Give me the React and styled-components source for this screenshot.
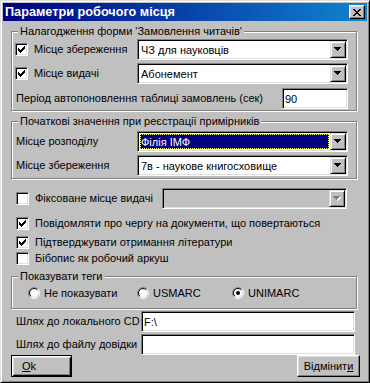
import React from 'react';
import styled, { createGlobalStyle, css } from 'styled-components';

const Global = createGlobalStyle`
  html, body { margin: 0; padding: 0; background: #c0c0c0; }
  body {
    font-family: "Liberation Sans", Arial, sans-serif;
    font-size: 11px;
    color: #000;
  }
  #root { width: 370px; height: 383px; }
`;

const raised = css`
  box-sizing: border-box;
  background: #c0c0c0;
  border: 1px solid;
  border-color: #fff #000 #000 #fff;
  box-shadow: inset -1px -1px 0 #808080, inset 1px 1px 0 #dfdfdf;
`;

const sunken = css`
  box-sizing: border-box;
  border: 1px solid;
  border-color: #808080 #fff #fff #808080;
  box-shadow: inset 1px 1px 0 #000, inset -1px -1px 0 #dfdfdf;
`;

const Window = styled.div`
  box-sizing: border-box;
  width: 370px;
  height: 383px;
  background: #c0c0c0;
  border: 1px solid;
  border-color: #dfdfdf #000 #000 #dfdfdf;
  box-shadow: inset 1px 1px 0 #fff, inset -1px -1px 0 #808080;
  padding: 2px;
  display: flex;
  flex-direction: column;
`;

const TitleBar = styled.div`
  height: 18px;
  flex: none;
  background: linear-gradient(to right, #000080, #1084d0);
  display: flex;
  align-items: center;
  justify-content: space-between;
  padding: 0 2px;
`;

const Title = styled.span`
  color: #fff;
  font-weight: bold;
  font-size: 12.7px;
  line-height: 14px;
  white-space: nowrap;
`;

const CloseBtn = styled.span`
  ${raised};
  width: 16px;
  height: 14px;
  display: flex;
  align-items: center;
  justify-content: center;
`;

const Content = styled.div`
  display: flex;
  flex-direction: column;
  padding: 0 10px 0 8px;
`;

const Group = styled.div`
  position: relative;
  box-sizing: border-box;
  margin-top: ${p => p.$mt}px;
  padding: ${p => p.$pt}px 8px ${p => p.$pb}px 3px;
  border: 1px solid #808080;
  box-shadow: inset 1px 1px 0 #fff, 1px 1px 0 #fff;
  display: flex;
  flex-direction: column;
`;

const Legend = styled.span`
  position: absolute;
  top: -7px;
  left: 6px;
  padding: 0 2px;
  background: #c0c0c0;
  line-height: 13px;
  white-space: nowrap;
`;

const Row = styled.div`
  display: flex;
  align-items: center;
  justify-content: space-between;
  height: ${p => p.$h ?? 21}px;
  margin-top: ${p => p.$mt ?? 0}px;
`;

const LeftGroup = styled.div`
  display: flex;
  align-items: center;
  gap: ${p => p.$gap ?? 6}px;
  margin-left: ${p => p.$ml ?? 0}px;
`;

const Label = styled.span`
  margin-left: ${p => p.$ml ?? 0}px;
  white-space: nowrap;
  line-height: 13px;
`;

const CheckBox = styled.span`
  ${sunken};
  width: 13px;
  height: 13px;
  flex: none;
  background: #fff;
  display: flex;
  align-items: center;
  justify-content: center;
`;

const Field = styled.div`
  ${sunken};
  width: ${p => p.$w}px;
  height: 21px;
  flex: none;
  margin-right: ${p => p.$mr ?? 0}px;
  background: ${p => (p.$disabled ? '#c0c0c0' : '#fff')};
  padding: 1px;
  display: flex;
  align-items: stretch;
`;

const FieldText = styled.span`
  flex: 1;
  display: flex;
  align-items: center;
  white-space: nowrap;
  overflow: hidden;
  padding-left: ${p => p.$pl ?? 2}px;
  ${p =>
    p.$selected &&
    css`
      margin: 1px;
      padding-left: 1px;
      background: #000080;
      color: #fff;
      outline: 1px dotted #ffff80;
      outline-offset: -1px;
    `}
`;

const DropBtn = styled.span`
  box-sizing: border-box;
  width: 16px;
  height: 17px;
  flex: none;
  background: #c0c0c0;
  border: 1px solid;
  border-color: #dfdfdf #000 #000 #dfdfdf;
  box-shadow: inset 1px 1px 0 #fff, inset -1px -1px 0 #808080;
  display: flex;
  align-items: center;
  justify-content: center;
`;

const RadioItem = styled.div`
  display: flex;
  align-items: center;
  gap: 4px;
  width: ${p => p.$w}px;
  flex: none;
  margin-left: ${p => p.$ml ?? 0}px;
`;

const RadioRow = styled.div`
  display: flex;
  align-items: center;
  height: 12px;
`;

const ButtonRow = styled.div`
  display: flex;
  justify-content: space-between;
  align-items: center;
  margin-right: -3px;
`;

const Button = styled.button`
  ${raised};
  width: ${p => p.$w}px;
  height: 22px;
  padding: 0 0 0 ${p => p.$pl ?? 0}px;
  font: inherit;
  font-size: 11px;
  color: #000;
  display: flex;
  align-items: center;
  justify-content: ${p => (p.$left ? 'flex-start' : 'center')};
  ${p =>
    p.$default &&
    css`
      border-color: #000;
      box-shadow: inset 1px 1px 0 #fff, inset -1px -1px 0 #000,
        inset 2px 2px 0 #dfdfdf, inset -2px -2px 0 #808080;
    `}
`;

const Mn = styled.u`
  text-decoration: underline;
  text-underline-offset: 1px;
`;

function Check() {
  return (
    <svg width="7" height="7" viewBox="0 0 7 7" shapeRendering="crispEdges">
      <path
        fill="#000"
        d="M0 2h1v3H0zM1 3h1v3H1zM2 4h1v3H2zM3 3h1v3H3zM4 2h1v3H4zM5 1h1v3H5zM6 0h1v3H6z"
      />
    </svg>
  );
}

function CheckItem({ checked, children, ml, gap }) {
  return (
    <LeftGroup $ml={ml} $gap={gap}>
      <CheckBox>{checked && <Check />}</CheckBox>
      <Label>{children}</Label>
    </LeftGroup>
  );
}

function Arrow({ disabled }) {
  const d = 'M0 0h7v1H0zM1 1h5v1H1zM2 2h3v1H2zM3 3h1v1H3z';
  return (
    <svg width="8" height="5" viewBox="0 0 8 5" shapeRendering="crispEdges">
      {disabled && <path fill="#fff" transform="translate(1 1)" d={d} />}
      <path fill={disabled ? '#808080' : '#000'} d={d} />
    </svg>
  );
}

function Combo({ w, value, selected, disabled, mr }) {
  return (
    <Field $w={w} $disabled={disabled} $mr={mr}>
      <FieldText $selected={selected}>{value}</FieldText>
      <DropBtn>
        <Arrow disabled={disabled} />
      </DropBtn>
    </Field>
  );
}

function Radio({ checked }) {
  const half = (r, c1, c2) => {
    const k = r * 0.7071;
    const a = `M${6 - k} ${6 + k}A${r} ${r} 0 0 1 ${6 + k} ${6 - k}`;
    const b = `M${6 + k} ${6 - k}A${r} ${r} 0 0 1 ${6 - k} ${6 + k}`;
    return (
      <>
        <path d={a} stroke={c1} fill="none" strokeWidth="1" />
        <path d={b} stroke={c2} fill="none" strokeWidth="1" />
      </>
    );
  };
  return (
    <svg width="12" height="12" viewBox="0 0 12 12" style={{ flex: 'none' }}>
      <circle cx="6" cy="6" r="4.5" fill="#fff" />
      {half(5.5, '#808080', '#fff')}
      {half(4.5, '#000', '#dfdfdf')}
      {checked && <circle cx="6" cy="6" r="2" fill="#000" />}
    </svg>
  );
}

export default function App() {
  return (
    <>
      <Global />
      <Window>
        <TitleBar>
          <Title>Параметри робочого місця</Title>
          <CloseBtn>
            <svg width="8" height="7" viewBox="0 0 8 7" shapeRendering="crispEdges">
              <path
                fill="#000"
                d="M0 0h2v1H0zM6 0h2v1H6zM1 1h2v1H1zM5 1h2v1H5zM2 2h4v1H2zM3 3h2v1H3zM2 4h4v1H2zM1 5h2v1H1zM5 5h2v1H5zM0 6h2v1H0zM6 6h2v1H6z"
              />
            </svg>
          </CloseBtn>
        </TitleBar>
        <Content>
          <Group $mt={10} $pt={7} $pb={1}>
            <Legend>Налагодження форми 'Замовлення читачів'</Legend>
            <Row>
              <CheckItem checked>Місце збереження</CheckItem>
              <Combo w={211} value="ЧЗ для науковців" />
            </Row>
            <Row $mt={3}>
              <CheckItem checked>Місце видачі</CheckItem>
              <Combo w={211} value="Абонемент" />
            </Row>
            <Row $mt={4}>
              <Label $ml={1}>Період автопоновлення таблиці замовлень (сек)</Label>
              <Field $w={66}>
                <FieldText $pl={1}>90</FieldText>
              </Field>
            </Row>
          </Group>

          <Group $mt={10} $pt={9} $pb={2}>
            <Legend>Початкові значення при реєстрації примірників</Legend>
            <Row>
              <Label $ml={1}>Місце розподілу</Label>
              <Combo w={211} value="Філія ІМФ" selected />
            </Row>
            <Row $mt={3}>
              <Label $ml={1}>Місце збереження</Label>
              <Combo w={211} value="7в - наукове книгосховище" />
            </Row>
          </Group>

          <Row $mt={9}>
            <CheckItem ml={5}>Фіксоване місце видачі</CheckItem>
            <Combo w={185} value="" disabled mr={10} />
          </Row>
          <Row $h={13} $mt={8}>
            <CheckItem ml={5} checked>
              Повідомляти про чергу на документи, що повертаються
            </CheckItem>
          </Row>
          <Row $h={13} $mt={6}>
            <CheckItem ml={5} checked>
              Підтверджувати отримання літератури
            </CheckItem>
          </Row>
          <Row $h={13} $mt={3}>
            <CheckItem ml={5}>Бібопис як робочий аркуш</CheckItem>
          </Row>

          <Group $mt={11} $pt={10} $pb={9}>
            <Legend>Показувати теги</Legend>
            <RadioRow>
              <RadioItem $ml={13} $w={109}>
                <Radio />
                <Label>Не показувати</Label>
              </RadioItem>
              <RadioItem $w={95}>
                <Radio />
                <Label>USMARC</Label>
              </RadioItem>
              <RadioItem $w={90}>
                <Radio checked />
                <Label>UNIMARC</Label>
              </RadioItem>
            </RadioRow>
          </Group>

          <Row $mt={2}>
            <Label $ml={5}>Шлях до локального CD</Label>
            <Field $w={214} $mr={2}>
              <FieldText $pl={1}>F:\</FieldText>
            </Field>
          </Row>
          <Row $mt={2}>
            <Label $ml={5}>Шлях до файлу довідки</Label>
            <Field $w={214} $mr={2}>
              <FieldText $pl={1}></FieldText>
            </Field>
          </Row>

          <ButtonRow>
            <Button $w={61} $default $left $pl={10}>
              <Mn>O</Mn>k
            </Button>
            <Button $w={63}>
              Відмінит<Mn>и</Mn>
            </Button>
          </ButtonRow>
        </Content>
      </Window>
    </>
  );
}
